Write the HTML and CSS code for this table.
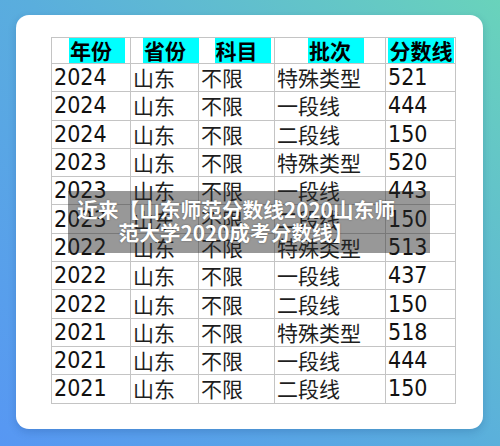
FILE: index.html
```html
<!DOCTYPE html>
<html lang="zh">
<head>
<meta charset="utf-8">
<link rel="stylesheet" href="styles.css">
</head>
<body>
<div class="card">
  <table class="scores">
    <colgroup>
      <col class="c1"><col class="c2"><col class="c3"><col class="c4"><col class="c5">
    </colgroup>
    <thead>
      <tr>
        <th class="pad"><span class="hl">年份</span></th>
        <th class="pad"><span class="hl">省份</span></th>
        <th class="pad"><span class="hl">科目</span></th>
        <th class="pad"><span class="hl">批次</span></th>
        <th><span class="hl full">分数线</span></th>
      </tr>
    </thead>
    <tbody>
      <tr><td class="num">2024</td><td>山东</td><td>不限</td><td>特殊类型</td><td class="num">521</td></tr>
      <tr><td class="num">2024</td><td>山东</td><td>不限</td><td>一段线</td><td class="num">444</td></tr>
      <tr><td class="num">2024</td><td>山东</td><td>不限</td><td>二段线</td><td class="num">150</td></tr>
      <tr><td class="num">2023</td><td>山东</td><td>不限</td><td>特殊类型</td><td class="num">520</td></tr>
      <tr><td class="num">2023</td><td>山东</td><td>不限</td><td>一段线</td><td class="num">443</td></tr>
      <tr><td class="num">2023</td><td>山东</td><td>不限</td><td>二段线</td><td class="num">150</td></tr>
      <tr><td class="num">2022</td><td>山东</td><td>不限</td><td>特殊类型</td><td class="num">513</td></tr>
      <tr><td class="num">2022</td><td>山东</td><td>不限</td><td>一段线</td><td class="num">437</td></tr>
      <tr><td class="num">2022</td><td>山东</td><td>不限</td><td>二段线</td><td class="num">150</td></tr>
      <tr><td class="num">2021</td><td>山东</td><td>不限</td><td>特殊类型</td><td class="num">518</td></tr>
      <tr><td class="num">2021</td><td>山东</td><td>不限</td><td>一段线</td><td class="num">444</td></tr>
      <tr><td class="num">2021</td><td>山东</td><td>不限</td><td>二段线</td><td class="num">150</td></tr>
    </tbody>
  </table>
  <div class="caption">近来【山东师范分数线2020山东师范大学2020成考分数线】</div>
</div>
</body>
</html>
```

FILE: styles.css
```css
html, body {
  margin: 0;
  padding: 0;
}
body {
  width: 500px;
  height: 446px;
  overflow: hidden;
  background: linear-gradient(45deg, #5797f3 0%, #5aaedd 50%, #69d3bb 100%);
  font-family: "Noto Sans CJK SC", sans-serif;
  padding: 15px 16px 0 16px;
  box-sizing: border-box;
}
.card {
  position: relative;
  width: 467px;
  height: 414px;
  background: #ffffff;
  border-radius: 13px;
  box-shadow: 0 3px 8px rgba(0, 40, 100, 0.18);
  padding: 22px 0 0 35px;
  box-sizing: border-box;
}
.scores {
  border-collapse: collapse;
  table-layout: fixed;
  width: 404px;
  border: 1px solid #b5b5b5;
}
.c1 { width: 79px; }
.c2 { width: 68px; }
.c3 { width: 76px; }
.c4 { width: 111px; }
.c5 { width: 70px; }
.scores th, .scores td {
  border: 1px solid #c4c4c4;
  padding: 0 0 0 2px;
  white-space: nowrap;
}
.scores th {
  height: 25px;
  line-height: 25px;
  text-align: center;
  font-weight: bold;
  font-size: 21px;
  color: #000;
  padding: 0;
  vertical-align: top;
}
.scores th.pad {
  padding-left: 12px;
}
.hl {
  display: inline-block;
  vertical-align: top;
  background: #00ffff;
  height: 25px;
  line-height: 25px;
  padding: 0 13px 0 1px;
}
.hl.full {
  padding: 0 1px 0 2px;
}
.scores td {
  height: 27.3px;
  font-size: 21px;
  line-height: 27px;
  color: #1e1e1e;
}
.scores td.num {
  font-family: "DejaVu Sans", sans-serif;
  font-stretch: condensed;
  font-size: 23px;
  color: #111;
}
.caption {
  position: absolute;
  left: 52px;
  top: 176px;
  width: 362px;
  height: 62px;
  box-sizing: border-box;
  padding: 7px 32px 0 6px;
  background: rgba(40, 40, 40, 0.48);
  color: #ffffff;
  font-weight: bold;
  font-size: 20.7px;
  line-height: 23px;
  text-align: center;
  text-shadow: 0 0 2px rgba(0, 0, 0, 0.4);
}
```
